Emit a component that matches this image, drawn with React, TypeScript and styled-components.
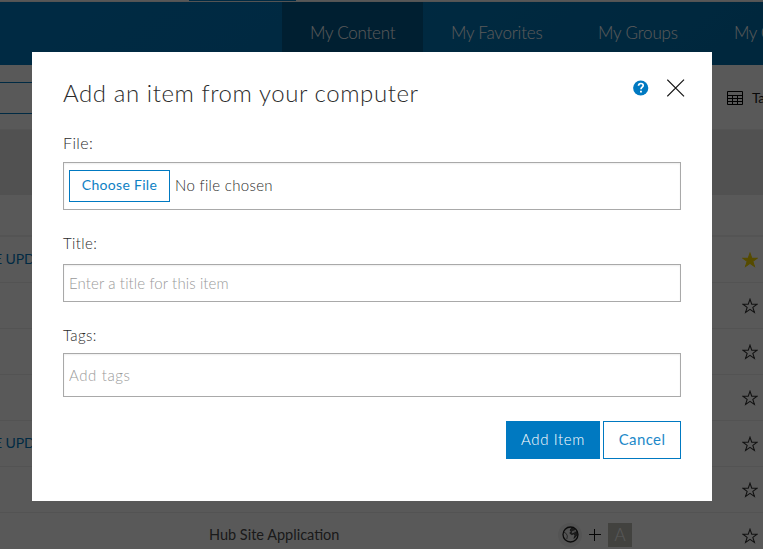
import React from "react";
import styled, { createGlobalStyle } from "styled-components";

const Global = createGlobalStyle`
  * { box-sizing: border-box; }
  html, body { margin: 0; height: 549px; overflow: hidden; background: #fff; }
  body { font-family: Lato, "Open Sans", sans-serif; font-size: 15px; font-weight: 300; color: #2b2b2b; }
  button, input { font-family: inherit; font-weight: inherit; }
`;

const Page = styled.div`
  position: relative;
  width: 763px;
  height: 549px;
  overflow: hidden;
  background: #fff;
`;

const TopStrip = styled.div`
  height: 2px;
  padding-left: 189px;
  background: #f8f8f8;
  border-bottom: 1px solid #efefef;
`;

const ActiveMark = styled.div`
  width: 107px;
  height: 1px;
  background: #0079c1;
`;

const Header = styled.header`
  display: flex;
  height: 63px;
  padding-left: 282px;
  background: linear-gradient(142deg, #0079c1 0%, #0076b8 55%, #0070ae 100%);
`;

const Tab = styled.a<{ $width: number; $active?: boolean; $spacing: number }>`
  flex: 0 0 ${(p) => p.$width}px;
  padding-left: 28px;
  line-height: 61px;
  font-size: 17px;
  letter-spacing: ${(p) => p.$spacing}px;
  white-space: nowrap;
  color: #fff;
  background: ${(p) => (p.$active ? "#00598e" : "transparent")};
`;

const Toolbar = styled.div`
  display: flex;
  justify-content: space-between;
  height: 65px;
  padding-top: 17px;
  border-bottom: 1px solid #efefef;
`;

const SearchBox = styled.div`
  width: 250px;
  height: 32px;
  border: 1px solid #0079c1;
  border-left: 0;
`;

const ViewOption = styled.div`
  display: flex;
  align-items: center;
  gap: 9px;
  width: 36px;
  height: 32px;
  line-height: 28px;
  font-size: 14px;
  font-weight: 400;
  letter-spacing: -0.3px;
  white-space: nowrap;
  color: #1c1c1c;
  svg { flex: none; }
`;

const ViewName = styled.span`
  padding-bottom: 1px;
`;

const ListHeader = styled.div`
  height: 65px;
  background: #e8e8e8;
`;

const SortBar = styled.div`
  height: 42px;
  border-bottom: 2px solid #efefef;
`;

const Row = styled.div`
  display: grid;
  grid-template-columns: 209px 349px 184px 21px;
  align-items: center;
  height: 46px;
  border-bottom: 1px solid #eee;
`;

const ItemLink = styled.a`
  margin-left: -6px;
  padding-bottom: 3px;
  font-size: 14px;
  font-weight: 400;
  letter-spacing: -0.1px;
  white-space: nowrap;
  color: #0079c1;
`;

const ItemType = styled.span`
  padding-bottom: 3px;
  font-size: 14.5px;
  font-weight: 400;
  color: #4c4c4c;
`;

const Sharing = styled.div`
  display: flex;
  align-items: center;
  padding-bottom: 2px;
`;

const Disc = styled.span`
  display: flex;
  align-items: center;
  justify-content: center;
  width: 24px;
  height: 24px;
  margin-right: 7px;
  border-radius: 50%;
  background: #efefef;
`;

const Avatar = styled.span`
  width: 24px;
  height: 24px;
  margin-left: 7px;
  line-height: 24px;
  text-align: center;
  font-size: 17px;
  color: #fff;
  background: #bdbdb6;
`;

const Scrim = styled.div`
  position: absolute;
  inset: 0;
  padding: 52px 51px 0 32px;
  background: rgba(0, 0, 0, 0.65);
`;

const Dialog = styled.section`
  display: flex;
  flex-direction: column;
  width: 680px;
  height: 449px;
  padding: 21px 31px 0;
  background: #fff;
`;

const DialogHead = styled.div`
  display: flex;
  align-items: center;
  height: 40px;
  margin-bottom: 19px;
`;

const Heading = styled.h1`
  flex: 1;
  margin: 0;
  font-size: 24px;
  font-weight: inherit;
  line-height: 40px;
  letter-spacing: 0.57px;
`;

const IconButton = styled.button<{ $gap?: number }>`
  display: flex;
  margin: 0 ${(p) => p.$gap ?? 0}px 11px 0;
  padding: 0;
  border: 0;
  background: none;
`;

const Label = styled.label<{ $size?: number; $height: number }>`
  flex: none;
  height: ${(p) => p.$height}px;
  line-height: 21px;
  font-size: ${(p) => p.$size ?? 15}px;
  letter-spacing: 0.4px;
`;

const FileField = styled.div`
  display: flex;
  align-items: center;
  flex: none;
  gap: 5px;
  height: 48px;
  margin-bottom: 23px;
  padding-left: 5px;
  border: 1px solid #a9a9a9;
  box-shadow: inset 0 1px 2px #eee;
`;

const FileStatus = styled.span`
  padding-bottom: 3px;
  letter-spacing: 0.33px;
`;

const ChooseButton = styled.button`
  width: 101px;
  height: 32px;
  padding: 0 0 3px;
  border: 1px solid #0079c1;
  background: #fff;
  color: #0f81c4;
  font-size: 14px;
  font-weight: 400;
  letter-spacing: 0.3px;
`;

const TextInput = styled.input<{ $height: number; $gap: number; $spacing: number }>`
  flex: none;
  width: 100%;
  height: ${(p) => p.$height}px;
  margin: 0 0 ${(p) => p.$gap}px;
  padding: 0 5px;
  border: 1px solid #a9a9a9;
  border-radius: 0;
  box-shadow: inset 0 1px 2px #eee;
  font-size: 15px;
  letter-spacing: ${(p) => p.$spacing}px;
  &::placeholder { color: #999; opacity: 1; }
`;

const Actions = styled.div`
  display: flex;
  justify-content: flex-end;
  gap: 3px;
`;

const Action = styled.button<{ $primary?: boolean }>`
  width: ${(p) => (p.$primary ? 94 : 78)}px;
  height: 38px;
  padding: 0 0 2px;
  border: 1px solid #0079c1;
  background: ${(p) => (p.$primary ? "#0079c1" : "#fff")};
  color: ${(p) => (p.$primary ? "#fff" : "#1d89c9")};
  font-size: 15px;
  font-weight: ${(p) => (p.$primary ? 300 : 400)};
  letter-spacing: ${(p) => (p.$primary ? 0.6 : 0.4)}px;
`;

const Star = ({ filled }: { filled?: boolean }) => (
  <svg width="16" height="16" viewBox="0 0 16 16">
    <path
      d="M8 1.2 9.75 6.1 15 6.2 10.85 9.35 12.4 14.4 8 11.4 3.6 14.4 5.15 9.35 1 6.2 6.25 6.1Z"
      fill={filled ? "#f5d800" : "none"}
      stroke={filled ? "#f5d800" : "#333"}
      strokeWidth="1.1"
    />
  </svg>
);

const TableIcon = () => (
  <svg width="16" height="14" viewBox="0 0 16 14" fill="none" stroke="#000">
    <path d="M.5.5h15v13H.5zM0 4.5h16M0 7.5h16M0 10.5h16M5.5 4v10M10.5 4v10" />
  </svg>
);

const Globe = () => (
  <svg width="17" height="17" viewBox="0 0 17 17">
    <circle cx="8.5" cy="8.5" r="7.5" fill="none" stroke="#222" strokeWidth="1.3" />
    <path
      d="M9.6 2 8 4.2 9.2 5.2 7.8 7.2 9.6 8.6 11.8 8 13 9.2 12 12.4 15.3 9 14.8 5.5 12.8 6.4 11.6 5.2 12.6 3.2Z"
      fill="#555"
      stroke="#222"
      strokeWidth=".7"
    />
    <path d="M9.8 5.4 12 4.6 12.4 6.6 10 7.2Z" fill="#ddd" />
    <path d="M2 6.2 4.2 7.6 5.4 10 4.8 13" fill="none" stroke="#555" strokeWidth=".8" />
  </svg>
);

const Plus = () => (
  <svg width="12" height="12" viewBox="0 0 12 12">
    <path d="M5.5 0v12M0 5.5h12" stroke="#111" />
  </svg>
);

const Help = () => (
  <svg width="16" height="16" viewBox="0 0 16 16">
    <circle cx="7.7" cy="8" r="7.6" fill="#0079c1" />
    <path
      d="M5.5 5.8C5.6 4.2 6.6 3.5 7.9 3.5c1.3 0 2.3.7 2.3 2 0 1.7-2.2 1.7-2.2 3.8"
      fill="none"
      stroke="#fff"
      strokeWidth="1.7"
    />
    <path d="M7 10.7h1.9v1.9H7z" fill="#fff" />
  </svg>
);

const Close = () => (
  <svg width="18" height="18" viewBox="0 0 18 18">
    <path d="M.3.6 17 17.3M17 .6.3 17.3" stroke="#151515" strokeWidth="1.2" />
  </svg>
);

const tabs = [
  { label: "My Content", width: 141, spacing: -0.25, active: true },
  { label: "My Favorites", width: 147, spacing: -0.2 },
  { label: "My Groups", width: 136, spacing: -0.15 },
  { label: "My Organization", width: 160, spacing: -0.4 },
];

const rows: { link?: string; type?: string; starred?: boolean }[] = [
  { link: "E UPDATE", starred: true },
  {},
  {},
  {},
  { link: "E UPDATE" },
  {},
  { type: "Hub Site Application" },
];

export default function App() {
  return (
    <Page>
      <Global />
      <TopStrip><ActiveMark /></TopStrip>
      <Header>
        {tabs.map((t) => (
          <Tab key={t.label} $width={t.width} $active={t.active} $spacing={t.spacing}>{t.label}</Tab>
        ))}
      </Header>
      <Toolbar>
        <SearchBox />
        <ViewOption><TableIcon /><ViewName>Table</ViewName></ViewOption>
      </Toolbar>
      <ListHeader />
      <SortBar />
      {rows.map((r, i) => (
        <Row key={i}>
          <ItemLink>{r.link}</ItemLink>
          <ItemType>{r.type}</ItemType>
          <Sharing>
            {r.type && (
              <>
                <Disc><Globe /></Disc>
                <Plus />
                <Avatar>A</Avatar>
              </>
            )}
          </Sharing>
          <Star filled={r.starred} />
        </Row>
      ))}
      <Scrim>
        <Dialog role="dialog">
          <DialogHead>
            <Heading>Add an item from your computer</Heading>
            <IconButton $gap={18} aria-label="Help"><Help /></IconButton>
            <IconButton $gap={-4} aria-label="Close"><Close /></IconButton>
          </DialogHead>
          <Label $height={30} $size={16}>File:</Label>
          <FileField>
            <ChooseButton>Choose File</ChooseButton>
            <FileStatus>No file chosen</FileStatus>
          </FileField>
          <Label $height={31}>Title:</Label>
          <TextInput $height={38} $gap={23} $spacing={0.12} placeholder="Enter a title for this item" />
          <Label $height={28}>Tags:</Label>
          <TextInput $height={44} $gap={24} $spacing={0.6} placeholder="Add tags" />
          <Actions>
            <Action $primary>Add Item</Action>
            <Action>Cancel</Action>
          </Actions>
        </Dialog>
      </Scrim>
    </Page>
  );
}
